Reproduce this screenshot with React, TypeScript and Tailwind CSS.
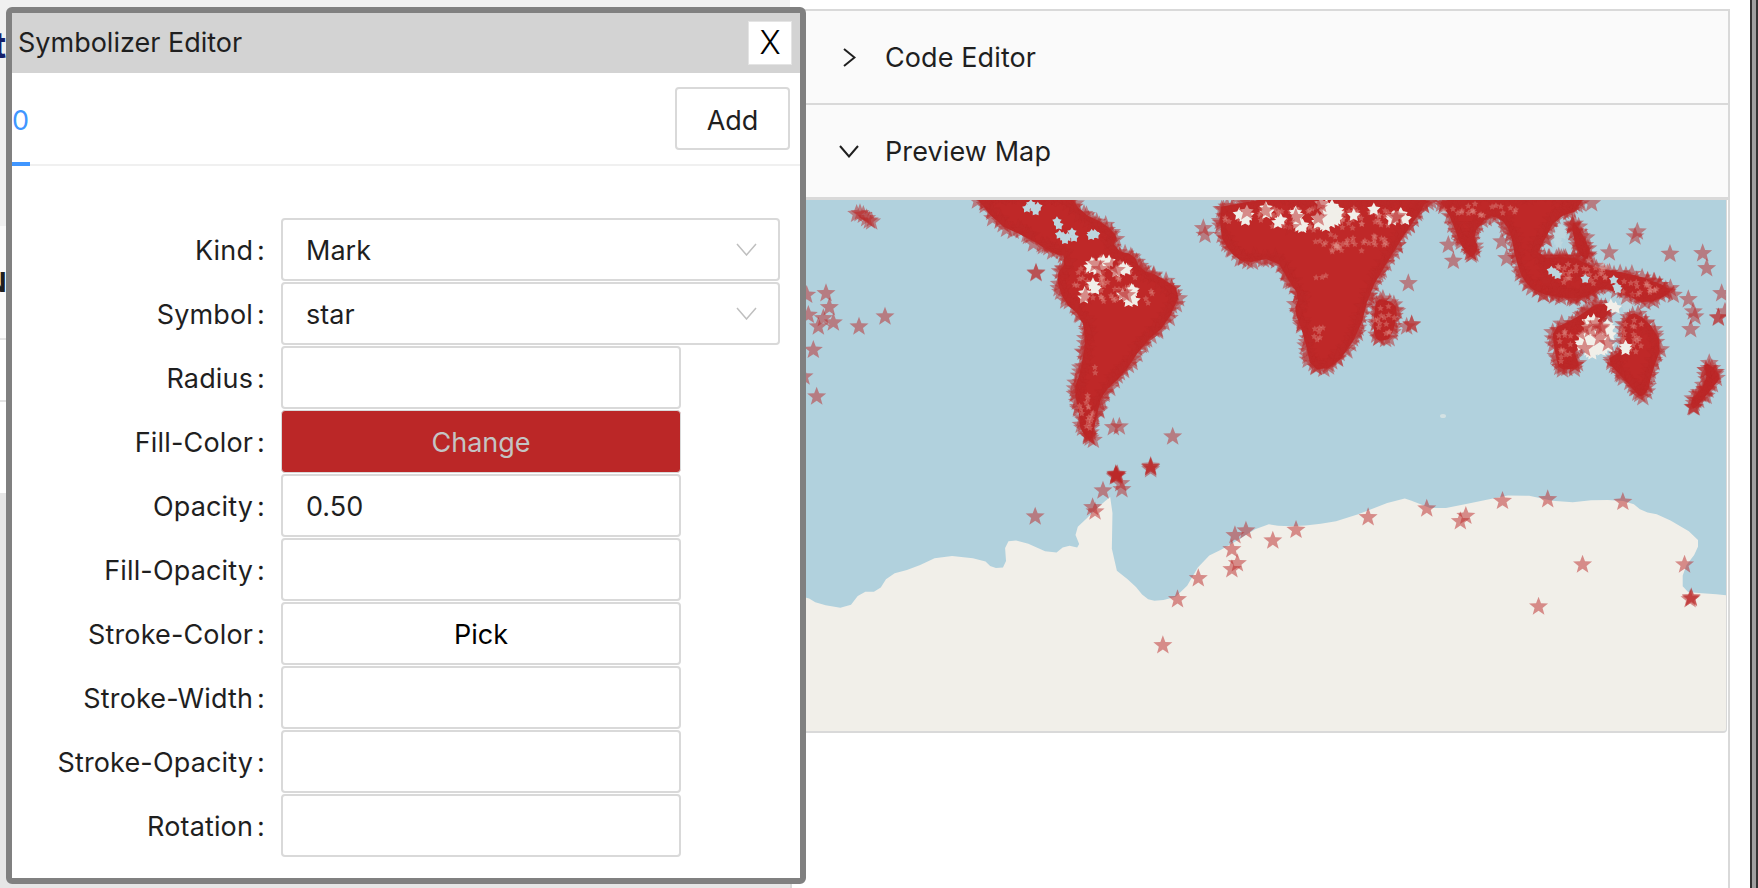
import React from "react";

type Pt = [number, number];

// helpers to go from the crops I traced on to map pixels
const a = (pts: number[]): Pt[] => {
  const out: Pt[] = [];
  for (let i = 0; i < pts.length; i += 2) out.push([pts[i] / 3 - 6, pts[i + 1] / 3 - 20]);
  return out;
};
const b = (pts: number[]): Pt[] => {
  const out: Pt[] = [];
  for (let i = 0; i < pts.length; i += 2) out.push([474 + pts[i] / 3, pts[i + 1] / 3 - 20]);
  return out;
};
const c = (pts: number[]): Pt[] => {
  const out: Pt[] = [];
  for (let i = 0; i < pts.length; i += 2) out.push([pts[i] / 1.637 - 6, 260 + pts[i + 1] / 3]);
  return out;
};
const d = (pts: number[]): Pt[] => {
  const out: Pt[] = [];
  for (let i = 0; i < pts.length; i += 2) out.push([374 + pts[i] / 3, pts[i + 1] / 3 - 10]);
  return out;
};

// same picture on every render
let seed = 42;
const rnd = () => {
  seed = (seed * 16807) % 2147483647;
  return seed / 2147483647;
};

function smooth(poly: Pt[], rounds: number): Pt[] {
  let cur = poly;
  for (let r = 0; r < rounds; r++) {
    const next: Pt[] = [];
    cur.forEach((p, i) => {
      const q = cur[(i + 1) % cur.length];
      next.push([p[0] * 0.75 + q[0] * 0.25, p[1] * 0.75 + q[1] * 0.25]);
      next.push([p[0] * 0.25 + q[0] * 0.75, p[1] * 0.25 + q[1] * 0.75]);
    });
    cur = next;
  }
  return cur;
}

const antarctica = smooth(
  c([
    -40, 400, 10, 410, 30, 432, 78, 447, 100, 395, 128, 395, 145, 345, 185, 325, 232, 285, 300, 298, 315, 325, 338, 322,
    335, 245, 360, 240, 415, 285, 435, 255, 460, 265, 448, 212, 475, 165, 495, 130, 512, 105, 510, 320, 545, 370, 565,
    415, 585, 425, 625, 405, 660, 295, 700, 260, 760, 190, 790, 200, 840, 195, 890, 180, 985, 112, 1005, 125, 1040, 150,
    1110, 125, 1175, 100, 1250, 130, 1310, 118, 1360, 125, 1380, 155, 1410, 165, 1470, 230, 1470, 270, 1445, 330, 1445,
    395, 1480, 400, 1560, 412, 1900, 2400, -400, 2400,
  ]),
  1,
);

const continents: Pt[][] = [
  a([
    505, 30, 580, 140, 680, 185, 760, 235, 790, 235, 755, 290, 780, 370, 835, 420, 845, 480, 830, 570, 810, 630, 825,
    700, 830, 760, 880, 805, 905, 700, 915, 650, 980, 590, 1040, 500, 1110, 440, 1158, 330, 1080, 275, 1030, 260, 1010,
    215, 950, 200, 965, 165, 920, 120, 855, 90, 810, 30,
  ]),
  d([
    120, 10, 105, 130, 140, 195, 190, 232, 280, 215, 320, 285, 345, 320, 330, 360, 360, 440, 385, 550, 470, 545, 550,
    430, 580, 310, 640, 210, 690, 130, 740, 60, 760, 10,
  ]),
  b([
    460, 30, 510, 140, 530, 200, 575, 252, 610, 205, 590, 165, 630, 120, 655, 125, 680, 160, 695, 240, 720, 310, 770,
    352, 860, 368, 940, 360, 960, 310, 870, 215, 780, 225, 805, 185, 835, 125, 905, 100, 915, 30,
  ]),
  b([860, 125, 895, 115, 945, 210, 925, 255, 880, 225]),
  b([780, 230, 870, 215, 960, 255, 1060, 270, 1178, 312, 1180, 350, 1100, 385, 1030, 355, 960, 335, 930, 362, 850, 368, 790, 320]),
  b([280, 345, 335, 350, 368, 385, 345, 480, 305, 498, 272, 480, 268, 420]),
  b([805, 440, 880, 405, 960, 350, 1020, 390, 890, 500, 915, 575, 830, 582, 812, 520]),
  b([1050, 380, 1110, 410, 1160, 490, 1125, 590, 1115, 640, 1080, 668, 1045, 630, 962, 540, 1020, 500, 1010, 440]),
  b([1260, 550, 1290, 535, 1338, 590, 1300, 640, 1240, 708, 1215, 665, 1270, 600]),
];

// light holes in the dense areas: [x, y, rx, ry, stars on top]
const toMapA = (e: number[]) => [e[0] / 3 - 6, e[1] / 3 - 20, e[2] / 3, e[3] / 3, e[4]];
const toMapB = (e: number[]) => [474 + e[0] / 3, e[1] / 3 - 20, e[2] / 3, e[3] / 3, e[4]];
const toMapD = (e: number[]) => [374 + e[0] / 3, e[1] / 3 - 10, e[2] / 3, e[3] / 3, e[4]];

const holes = [
  ...[
    [195, 78, 18, 18, 1],
    [255, 62, 16, 10, 1],
    [300, 95, 10, 10, 0],
    [350, 108, 20, 10, 1],
    [345, 75, 14, 8, 1],
    [440, 75, 36, 40, 3],
    [650, 88, 26, 18, 2],
    [520, 75, 6, 4, 0],
    [582, 60, 6, 4, 0],
  ].map(toMapD),
  ...[
    [905, 255, 40, 14, 3],
    [960, 268, 22, 8, 1],
    [885, 320, 14, 8, 0],
    [985, 350, 20, 28, 2],
    [855, 345, 8, 10, 1],
  ].map(toMapA),
  ...[
    [945, 470, 52, 52, 9],
    [1030, 503, 12, 8, 0],
    [1000, 380, 12, 6, 0],
  ].map(toMapB),
];

const waterHoles = [
  [840, 165, 62, 9],
  [800, 175, 18, 7],
  [695, 82, 22, 16],
  [770, 132, 10, 12],
].map((e) => toMapA([...e, 0]));

const waterGaps = [
  [1020, 325, 16, 6],
  [1040, 372, 14, 16],
  [825, 280, 20, 10],
  [835, 165, 16, 30],
  [920, 300, 10, 6],
  [1000, 300, 10, 5],
].map((e) => toMapB([...e, 0]));

// mottled bits where the star layer thins out: [x, y, rx, ry]
const speckle = [
  ...[
    [400, 85, 290, 36],
    [450, 160, 50, 30],
    [550, 165, 90, 30],
    [425, 258, 22, 12],
    [410, 430, 24, 28],
  ].map((e) => toMapD([...e, 0])),
  ...[
    [915, 300, 95, 70],
    [1050, 355, 16, 22],
    [860, 705, 30, 60],
    [885, 575, 12, 14],
  ].map((e) => toMapA([...e, 0])),
  ...[
    [1060, 470, 35, 55],
    [850, 500, 30, 50],
    [900, 275, 90, 40],
    [1070, 325, 70, 28],
    [315, 420, 30, 50],
    [600, 90, 110, 20],
  ].map((e) => toMapB([...e, 0])),
];

// single stars
const loose: Pt[] = [
  ...a([
    180, 100, 190, 105, 200, 115, 208, 122, 215, 125, 170, 102, 708, 280, 708, 278, 78, 340, 88, 382, 70, 415, 100, 428,
    55, 440, 177, 440, 255, 410, 40, 510, 50, 650, 20, 345, 25, 405, 12, 590, 1210, 145, 1215, 165, 940, 742, 958, 740,
    880, 780, 1118, 770, 1052, 862, 1052, 858, 948, 885, 948, 888, 952, 883, 895, 688,
  ]),
  ...b([
    935, 70, 1072, 155, 1065, 170, 988, 218, 1170, 222, 1268, 220, 1280, 265, 1325, 340, 1335, 395, 1315, 412, 1315,
    414, 385, 310, 395, 435, 380, 440, 395, 433, 520, 243, 505, 195, 665, 185, 680, 235, 1225, 358, 1240, 395, 1245,
    410, 1232, 448, 1180, 345, 1040, 350,
  ]),
  ...c([
    574, 22, 574, 28, 517, 45, 517, 42, 519, 48, 516, 50, 525, 70, 527, 88, 496, 92, 479, 142, 483, 155, 385, 170, 930,
    172, 1026, 146, 1090, 168, 1081, 184, 1150, 123, 1224, 118, 1347, 126, 730, 212, 712, 226, 812, 210, 774, 242, 707,
    268, 716, 310, 707, 328, 652, 355, 618, 418, 594, 556, 1209, 440, 1281, 314, 1448, 314, 1459, 412, 1459, 415, 1457,
    418,
  ]),
];

function inset(poly: Pt[], dist: number): Pt[] {
  let area = 0;
  poly.forEach((p, i) => {
    const q = poly[(i + 1) % poly.length];
    area += p[0] * q[1] - q[0] * p[1];
  });
  const s = area > 0 ? 1 : -1;
  return poly.map((p, i) => {
    const prev = poly[(i - 1 + poly.length) % poly.length];
    const next = poly[(i + 1) % poly.length];
    const dx = next[0] - prev[0];
    const dy = next[1] - prev[1];
    const len = Math.hypot(dx, dy) || 1;
    return [p[0] - (s * dy * dist) / len, p[1] + (s * dx * dist) / len] as Pt;
  });
}

function fringe(poly: Pt[]): Pt[] {
  const out: Pt[] = [];
  poly.forEach((p, i) => {
    const q = poly[(i + 1) % poly.length];
    const n = Math.ceil(Math.hypot(q[0] - p[0], q[1] - p[1]) / 4.6);
    for (let k = 0; k < n; k++) {
      out.push([
        p[0] + ((q[0] - p[0]) * k) / n + (rnd() - 0.5) * 6,
        p[1] + ((q[1] - p[1]) * k) / n + (rnd() - 0.5) * 6,
      ]);
    }
  });
  return out;
}

function scatter(e: number[], n: number): Pt[] {
  return Array.from({ length: n }, () => {
    const t = rnd() * Math.PI * 2;
    const r = Math.sqrt(rnd());
    return [e[0] + Math.cos(t) * e[2] * r, e[1] + Math.sin(t) * e[3] * r] as Pt;
  });
}

const toPoints = (poly: Pt[]) => poly.map((p) => p.join(",")).join(" ");

const fills = continents.map((poly) => inset(smooth(poly, 1), 4));
const edgeStars = continents.flatMap((poly) => fringe(inset(smooth(poly, 1), 6)));
const gapStamps = holes.flatMap((h) => scatter(h, Math.ceil((h[2] * h[3]) / 6)));
const waterStamps = [...waterHoles, ...waterGaps].flatMap((h) => scatter(h, Math.ceil((h[2] * h[3]) / 8)));
const holeStars = holes.flatMap((h) => scatter(h, h[4]));
const specks = speckle.flatMap((h) => scatter(h, Math.ceil((h[2] * h[3]) / 12)));

const starPoints = (outer: number, innerRatio: number) => {
  const pts: string[] = [];
  for (let i = 0; i < 10; i++) {
    const r = i % 2 === 0 ? outer : outer * innerRatio;
    const t = -Math.PI / 2 + (i * Math.PI) / 5;
    pts.push(`${(Math.cos(t) * r).toFixed(2)},${(Math.sin(t) * r).toFixed(2)}`);
  }
  return pts.join(" ");
};

function WorldMap() {
  return (
    <svg viewBox="-14 0 934 531" className="block h-[531px] w-[934px] bg-[#b1d1dd]">
      <defs>
        <polygon id="star" points={starPoints(10, 0.42)} fill="#bb2727" fillOpacity={0.5} />
        <polygon id="gap" points={starPoints(7, 0.5)} fill="#f1efe9" />
        <polygon id="sea" points={starPoints(5, 0.6)} fill="#bcd6df" />
        <polygon id="speck" points={starPoints(3.5, 0.5)} fill="#e2938c" fillOpacity={0.4} />
      </defs>
      <polygon points={toPoints(antarctica)} fill="#f1efe9" />
      {fills.map((poly, i) => (
        <polygon key={i} points={toPoints(poly)} fill="#bf2828" />
      ))}
      {edgeStars.map((p, i) => (
        <use key={i} href="#star" x={p[0]} y={p[1]} />
      ))}
      {specks.map((p, i) => (
        <use key={i} href="#speck" x={p[0]} y={p[1]} />
      ))}
      {waterStamps.map((p, i) => (
        <use key={i} href="#sea" x={p[0]} y={p[1]} />
      ))}
      {gapStamps.map((p, i) => (
        <use key={i} href="#gap" x={p[0]} y={p[1]} />
      ))}
      {holeStars.map((p, i) => (
        <use key={i} href="#star" x={p[0]} y={p[1]} />
      ))}
      {loose.map((p, i) => (
        <use key={i} href="#star" x={p[0]} y={p[1]} />
      ))}
      <ellipse cx={637} cy={216} rx={3} ry={2} fill="#d4e2e4" />
    </svg>
  );
}

function SelectChevron() {
  return (
    <svg width="21" height="13" viewBox="0 0 21 13" fill="none" stroke="#bfbfbf" strokeWidth="1.5">
      <path d="M1 1l9.5 11L20 1" />
    </svg>
  );
}

function FormRow({ label, children }: { label: string; children: React.ReactNode }) {
  return (
    <div className="flex h-[64px] items-start">
      <div className="flex h-[63px] w-[269px] shrink-0 items-center justify-end pr-[16px] pt-[3px] tracking-[0.15px] text-[#1f1f1f]">
        <span>{label}</span>
        <span className="ml-[4px]">:</span>
      </div>
      {children}
    </div>
  );
}

function SelectBox({ value }: { value: string }) {
  return (
    <div className="flex h-[63px] w-[499px] items-center justify-between rounded border-2 border-[#d9d9d9] pl-[23px] pr-[21px] text-[#1f1f1f]">
      <span className="pt-[3px]">{value}</span>
      <SelectChevron />
    </div>
  );
}

function InputBox({ value }: { value?: string }) {
  return (
    <div className="flex h-[63px] w-[400px] items-center rounded border-2 border-[#d9d9d9] pl-[23px] pt-[3px] text-[#1f1f1f]">
      {value}
    </div>
  );
}

function SymbolizerEditor() {
  return (
    <div className="absolute left-[6px] top-[7px] flex h-[877px] w-[800px] flex-col rounded-md border-[6px] border-[#808080] bg-white text-[27px]">
      <div className="flex h-[60px] shrink-0 items-center justify-between bg-[#d3d3d3] pl-[6px] pr-[8px]">
        <span className="text-[#1f1f1f]">Symbolizer Editor</span>
        <button className="flex h-[44px] w-[44px] items-center justify-center border border-[#e4e4e4] bg-white text-[32px] font-light text-black">
          X
        </button>
      </div>
      <div className="relative flex h-[93px] shrink-0 items-center justify-between border-b-2 border-[#f0f0f0] pr-[10px]">
        <span className="pt-[5px] text-[#4096ff]">0</span>
        <button className="h-[63px] w-[115px] rounded border-2 border-[#d9d9d9] bg-white pt-[5px] text-[#1f1f1f]">Add</button>
        <div className="absolute bottom-[-2px] left-0 h-[4px] w-[18px] bg-[#4096ff]" />
      </div>
      <div className="mt-[52px] flex flex-col">
        <FormRow label="Kind">
          <SelectBox value="Mark" />
        </FormRow>
        <FormRow label="Symbol">
          <SelectBox value="star" />
        </FormRow>
        <FormRow label="Radius">
          <InputBox />
        </FormRow>
        <FormRow label="Fill-Color">
          <button className="h-[63px] w-[400px] rounded border border-[#d9d9d9] bg-[#bb2727] pt-[3px] text-[#c4c4c4]">Change</button>
        </FormRow>
        <FormRow label="Opacity">
          <InputBox value="0.50" />
        </FormRow>
        <FormRow label="Fill-Opacity">
          <InputBox />
        </FormRow>
        <FormRow label="Stroke-Color">
          <button className="h-[63px] w-[400px] rounded border-2 border-[#d9d9d9] bg-white pt-[3px] text-black">Pick</button>
        </FormRow>
        <FormRow label="Stroke-Width">
          <InputBox />
        </FormRow>
        <FormRow label="Stroke-Opacity">
          <InputBox />
        </FormRow>
        <FormRow label="Rotation">
          <InputBox />
        </FormRow>
      </div>
    </div>
  );
}

function PanelHeader({ title, open }: { title: string; open?: boolean }) {
  return (
    <div className="flex h-[92px] items-center bg-[#fafafa] pl-[47px] text-[27px] text-[#1f1f1f]">
      <span className="flex w-[20px] justify-center">
        {open ? (
          <svg width="20" height="13" viewBox="0 0 20 13" fill="none" stroke="#1f1f1f" strokeWidth="2">
            <path d="M1 1l9 10.5L19 1" />
          </svg>
        ) : (
          <svg width="13" height="19" viewBox="0 0 13 19" fill="none" stroke="#1f1f1f" strokeWidth="2">
            <path d="M1 1l10.5 8.5L1 18" />
          </svg>
        )}
      </span>
      <span className="ml-[26px] pt-[2px] tracking-[0.1px]">{title}</span>
    </div>
  );
}

export default function App() {
  return (
    <div className="relative flex h-[888px] w-[1758px] overflow-hidden bg-white font-['Inter',sans-serif]">
      {/* page behind the dialog, only a sliver of it shows */}
      <div className="flex h-full w-[790px] shrink-0 flex-col text-[27px]">
        <div className="flex h-[226px] items-start bg-[#f0f0f0] pt-[18px] text-[36px] font-bold text-[#14206b]">
          <span className="-ml-[7px]">t</span>
        </div>
        <div className="flex h-[112px] items-center bg-[#fafafa] pt-[2px] font-bold text-[#1f1f1f]">
          <span className="-ml-[14px]">N</span>
        </div>
        <div className="h-[62px] border-t-2 border-[#e4e4e4]" />
        <div className="h-[93px] border-t-2 border-[#e4e4e4]" />
        <div className="flex-1 bg-[#e6e6e6]" />
      </div>

      <div className="mt-[9px] flex h-[879px] w-[940px] shrink-0 flex-col border-x-2 border-t-2 border-[#d9d9d9]">
        <PanelHeader title="Code Editor" />
        <div className="h-[2px] bg-[#d9d9d9]" />
        <PanelHeader title="Preview Map" open />
        <div className="h-[3px] bg-[#d9d9d9]" />
        <div className="w-[935px] overflow-hidden rounded-b border-b-2 border-r border-[#d9d9d9]">
          <WorldMap />
        </div>
      </div>

      <div className="ml-[20px] h-full w-[8px] shrink-0 border-x-2 border-[#333333] bg-[#a0a0a0]" />

      <SymbolizerEditor />
    </div>
  );
}
